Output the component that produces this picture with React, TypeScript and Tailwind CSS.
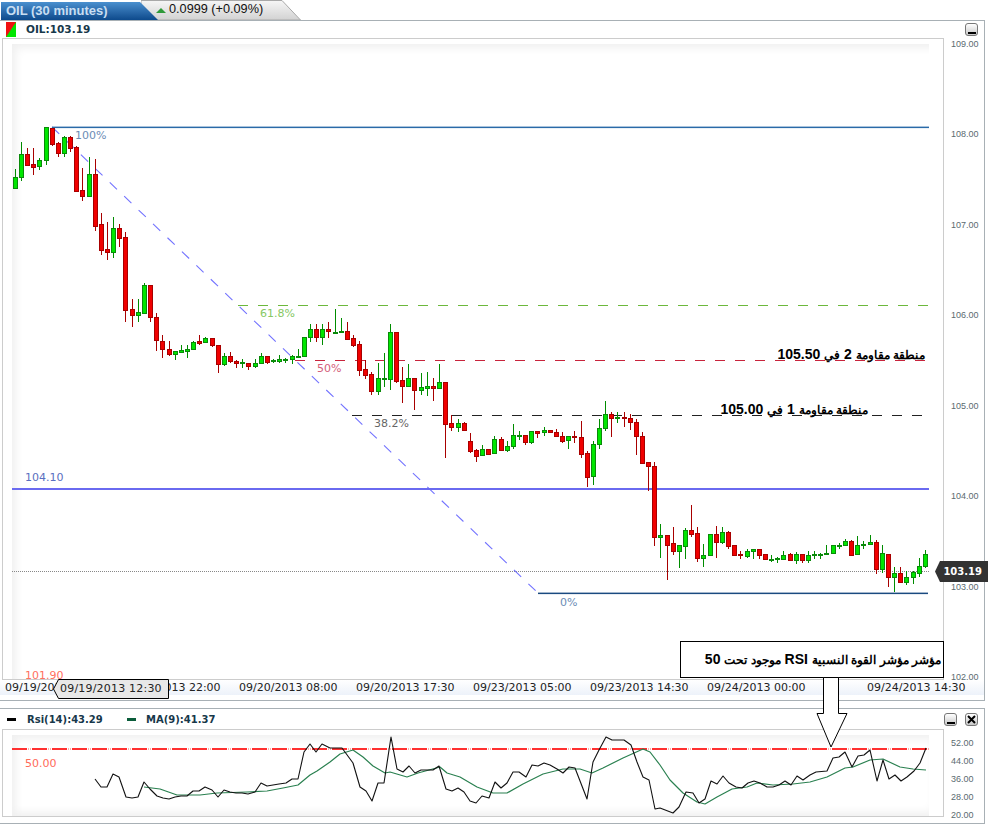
// OIL 30 minute chart with RSI panel
type Candle = [number, number, number, number, number];

// wick top, body top, body bottom, wick bottom, 1 = up (green)
const candles: Candle[] = [
  [169, 177, 188, 188, 1], [142, 154, 177, 181, 1], [148, 154, 165, 166, 0], [148, 164, 167, 175, 0],
  [158, 160, 166, 170, 1], [127, 127, 160, 165, 1], [128, 128, 144, 146, 0], [142, 143, 153, 157, 0],
  [136, 137, 153, 157, 1], [136, 137, 148, 152, 0], [146, 147, 191, 192, 0], [168, 190, 196, 201, 0],
  [157, 174, 196, 197, 1], [159, 174, 226, 231, 0], [213, 224, 250, 255, 0], [222, 249, 252, 260, 0],
  [217, 228, 252, 258, 1], [224, 228, 238, 247, 0], [232, 237, 310, 322, 0], [299, 309, 315, 327, 0],
  [299, 312, 315, 322, 1], [283, 285, 313, 313, 1], [285, 285, 317, 322, 0], [313, 317, 340, 351, 0],
  [335, 341, 349, 358, 0], [341, 349, 354, 356, 0], [351, 351, 354, 360, 1], [345, 350, 352, 353, 1],
  [345, 349, 351, 358, 1], [341, 342, 349, 349, 1], [335, 341, 343, 345, 0], [337, 338, 342, 342, 1],
  [338, 338, 345, 347, 0], [345, 345, 364, 373, 0], [353, 356, 364, 366, 1], [352, 356, 361, 363, 0],
  [360, 361, 363, 368, 0], [359, 362, 363, 368, 1], [363, 363, 366, 370, 0], [359, 363, 366, 368, 1],
  [353, 356, 363, 363, 1], [356, 356, 362, 364, 0], [359, 360, 361, 363, 1], [355, 359, 361, 363, 1],
  [358, 359, 360, 363, 1], [355, 356, 359, 364, 1], [349, 356, 357, 357, 1], [337, 337, 356, 356, 1],
  [324, 329, 337, 342, 1], [324, 329, 337, 342, 0], [324, 329, 337, 345, 1], [322, 329, 331, 338, 0],
  [309, 332, 333, 333, 1], [318, 331, 332, 332, 1], [322, 331, 339, 339, 0], [335, 338, 345, 347, 0],
  [341, 344, 370, 376, 0], [360, 369, 375, 379, 0], [372, 374, 391, 395, 0], [363, 378, 391, 395, 1],
  [353, 378, 379, 387, 1], [324, 332, 379, 390, 1], [332, 332, 381, 383, 0], [367, 380, 386, 403, 0],
  [364, 378, 386, 386, 1], [378, 378, 390, 410, 0], [373, 387, 390, 395, 1], [372, 386, 388, 396, 1],
  [378, 386, 388, 401, 0], [364, 382, 388, 388, 1], [382, 382, 424, 458, 0], [415, 423, 427, 431, 0],
  [419, 423, 427, 432, 1], [422, 423, 430, 430, 0], [433, 441, 451, 453, 0], [449, 450, 456, 462, 0],
  [445, 449, 455, 455, 1], [449, 449, 454, 455, 0], [436, 439, 453, 454, 1], [437, 439, 450, 450, 0],
  [441, 446, 450, 452, 1], [424, 435, 446, 449, 1], [431, 435, 436, 440, 1], [435, 435, 442, 445, 0],
  [431, 431, 442, 444, 1], [431, 431, 433, 438, 0], [427, 430, 432, 436, 1], [430, 430, 432, 432, 0],
  [429, 432, 436, 436, 0], [432, 436, 441, 443, 0], [436, 436, 440, 449, 1], [431, 436, 437, 443, 0],
  [421, 437, 454, 458, 0], [451, 453, 477, 487, 0], [441, 444, 476, 485, 1], [419, 428, 444, 449, 1],
  [401, 414, 428, 431, 1], [412, 414, 418, 437, 0], [412, 417, 418, 423, 1], [412, 417, 418, 427, 0],
  [414, 418, 422, 430, 0], [419, 422, 436, 455, 0], [432, 436, 463, 463, 0], [462, 462, 466, 491, 0],
  [462, 466, 537, 546, 0], [524, 535, 537, 558, 1], [535, 535, 545, 580, 0], [527, 543, 551, 555, 0],
  [545, 545, 551, 568, 1], [528, 530, 546, 559, 1], [505, 530, 534, 537, 0], [527, 533, 558, 562, 0],
  [544, 555, 558, 567, 1], [534, 534, 555, 555, 1], [526, 534, 542, 558, 0], [527, 532, 542, 544, 1],
  [531, 532, 546, 549, 0], [545, 545, 555, 555, 0], [551, 554, 555, 559, 0], [549, 551, 556, 558, 1],
  [549, 549, 551, 559, 1], [549, 549, 555, 559, 0], [554, 554, 559, 559, 0], [555, 559, 560, 562, 1],
  [557, 558, 559, 563, 1], [551, 555, 559, 559, 1], [553, 554, 560, 561, 0], [552, 554, 560, 564, 1],
  [554, 554, 560, 563, 0], [551, 555, 560, 563, 1], [551, 554, 555, 559, 1], [553, 554, 555, 559, 1],
  [545, 553, 554, 554, 1], [545, 545, 553, 553, 1], [543, 545, 546, 549, 1], [539, 541, 545, 545, 1],
  [540, 541, 555, 555, 0], [536, 545, 554, 554, 1], [541, 544, 545, 549, 1], [535, 542, 544, 545, 1],
  [540, 542, 569, 574, 0], [545, 553, 569, 573, 1], [554, 554, 577, 587, 0], [567, 573, 577, 592, 1],
  [567, 573, 582, 582, 0], [571, 577, 582, 585, 1], [571, 572, 577, 584, 1], [558, 566, 573, 577, 1],
  [550, 554, 566, 568, 1],
];

const rsi =
  "95,779 101,787 107,787 113,774 119,777 126,797 132,798 138,797 144,782 150,789 157,796 163,798 169,799 175,797 181,796 187,796 193,791 199,791 205,787 212,790 218,797 224,790 230,792 236,793 242,793 248,794 255,792 261,783 267,786 273,785 279,784 286,783 292,779 298,779 304,752 310,744 316,752 322,744 330,748 342,748 353,763 360,787 366,791 372,801 378,783 384,783 391,737 397,769 403,772 409,766 415,773 421,770 427,770 433,770 439,766 446,789 452,791 458,788 464,792 470,801 476,803 482,796 489,798 495,782 501,788 507,783 513,772 519,772 526,777 532,765 538,766 544,763 550,765 557,769 563,773 569,767 575,768 587,799 593,762 599,750 606,737 612,740 618,740 624,740 631,745 637,762 643,777 649,780 655,809 660,808 673,813 679,807 686,792 693,793 699,803 705,799 711,781 717,784 723,776 729,783 736,787 742,788 748,783 754,781 760,783 767,787 773,787 779,785 785,781 791,785 797,776 803,780 810,775 816,772 827,771 833,758 839,757 845,752 852,767 858,756 864,755 870,750 877,781 883,760 889,779 895,775 901,781 907,777 914,771 920,763 926,748";

const ma =
  "144,787 160,789 177,795 200,795 217,793 247,792 267,791 283,788 298,785 310,775 317,771 330,762 340,754 353,750 363,757 373,766 385,773 390,772 407,777 418,773 440,767 447,773 460,777 477,787 493,793 507,793 523,784 543,774 563,769 580,769 592,773 603,768 623,758 643,749 650,752 660,765 670,780 683,793 697,802 705,804 717,797 732,789 747,787 757,783 773,785 793,784 810,782 827,777 845,768 853,767 870,760 883,759 900,767 913,769 926,770";

const priceLabels = ["109.00", "108.00", "107.00", "106.00", "105.00", "104.00", "103.00", "102.00"];
const rsiLabels = ["52.00", "44.00", "36.00", "28.00", "20.00"];
const dates = [
  "09/19/2013 12:30",
  "09/19/2013 22:00",
  "09/20/2013 08:00",
  "09/20/2013 17:30",
  "09/23/2013 05:00",
  "09/23/2013 14:30",
  "09/24/2013 00:00",
];

const chartText = "font-['DejaVu_Sans',sans-serif] text-[11px]";

const MinButton = () => (
  <div className="flex h-[13px] w-[13px] items-end justify-center rounded-[3px] border border-[#777] bg-gradient-to-b from-white to-[#c8c8c8] pb-[1px]">
    <div className="h-[2px] w-[8px] bg-black" />
  </div>
);

const CloseButton = () => (
  <div className="flex h-[13px] w-[13px] items-center justify-center rounded-[3px] border border-[#777] bg-gradient-to-b from-white to-[#c8c8c8]">
    <svg width="9" height="9" viewBox="0 0 9 9">
      <path d="M1 1L8 8M8 1L1 8" stroke="#000" strokeWidth="2" />
    </svg>
  </div>
);

const PriceChart = () => (
  <svg className="absolute left-0 top-0 overflow-visible" width="940" height="640" viewBox="3 39 940 640">
    <line x1="12" y1="571.5" x2="929" y2="571.5" stroke="#888" strokeDasharray="1 1" />
    <line x1="52" y1="127" x2="538" y2="593" stroke="#7272ff" strokeWidth="1.1" strokeDasharray="10 10" />
    <rect x="52" y="126.6" width="877" height="1.5" fill="#2a6aa8" />
    <line x1="238" y1="305.5" x2="929" y2="305.5" stroke="#6cb83c" strokeDasharray="10 10" />
    <line x1="295" y1="360.5" x2="925" y2="360.5" stroke="#c8243c" strokeDasharray="10 10" />
    <line x1="352" y1="415.5" x2="923" y2="415.5" stroke="#222" strokeDasharray="10 10" />
    <rect x="538" y="592.6" width="390" height="1.5" fill="#1a4a80" />
    <line x1="12" y1="489" x2="929" y2="489" stroke="#6a6af0" strokeWidth="2" />

    {candles.map(([wt, top, bottom, wb, up], i) => {
      const x = Math.floor(15.3 + 6.149 * i) + 0.5;
      return (
        <g key={i} shapeRendering="crispEdges">
          <line x1={x} y1={wt} x2={x} y2={wb} stroke={up ? "#008c00" : "#a80000"} />
          <rect
            x={x - 2}
            y={top + 0.5}
            width="4"
            height={Math.max(bottom - top, 1)}
            fill={up ? "#00e600" : "#f00000"}
            stroke={up ? "#0a8a0a" : "#a80000"}
          />
        </g>
      );
    })}

    <text x="75" y="139" fill="#6b8cb5" className={chartText}>100%</text>
    <text x="260" y="317" fill="#86c864" className={chartText}>61.8%</text>
    <text x="317" y="372" fill="#d4607a" className={chartText}>50%</text>
    <text x="374" y="427" fill="#666" className={chartText}>38.2%</text>
    <text x="560" y="606" fill="#6b8cb5" className={chartText}>0%</text>
    <text x="25" y="481" fill="#5a6fc0" className={chartText}>104.10</text>
    <text x="25" y="679" fill="#ff7060" className={chartText}>101.90</text>
  </svg>
);

const RsiChart = () => (
  <svg className="absolute left-0 top-0" width="940" height="86" viewBox="3 730 940 86">
    <line x1="12" y1="749" x2="929" y2="749" stroke="#ff5a50" strokeDasharray="1 1" />
    <line x1="12" y1="749" x2="929" y2="749" stroke="#ff3030" strokeWidth="2" strokeDasharray="15 5" />
    <polyline points={ma} fill="none" stroke="#2a8050" strokeWidth="1.2" strokeLinejoin="round" />
    <polyline points={rsi} fill="none" stroke="#111" strokeWidth="1.1" strokeLinejoin="round" />
    <text x="25" y="767" fill="#ff6b5a" className={chartText}>50.00</text>
  </svg>
);

export default function App() {
  return (
    <div className="relative h-[824px] w-[989px] overflow-hidden bg-white font-['Liberation_Sans',sans-serif]">
      {/* Tabs */}
      <div className="flex h-[20px] items-end">
        <div className="relative z-10 ml-[1px] flex h-[18px] w-[157px] items-center bg-gradient-to-b from-[#4a90cf] to-[#0d4a8c] pl-[5px] text-[13px] font-bold text-[#c8def2] [clip-path:polygon(0_0,139px_0,100%_100%,0_100%)]">
          OIL (30 minutes)
        </div>
        <div className="relative -ml-[17px] flex h-[20px] w-[160px] items-center pl-[15px] text-[12.7px] text-[#111]">
          <svg className="absolute left-0 top-0" width="160" height="20" viewBox="0 0 160 20">
            <defs>
              <linearGradient id="tabFill" x1="0" y1="0" x2="0" y2="1">
                <stop offset="0" stopColor="#f6f6f6" />
                <stop offset="1" stopColor="#d2d2d2" />
              </linearGradient>
            </defs>
            <path d="M0 .5H141L159.5 20H0Z" fill="url(#tabFill)" stroke="#a8a8a8" />
          </svg>
          <div className="relative mr-[3px] h-0 w-0 border-x-[5px] border-b-[5px] border-x-transparent border-b-[#2f9a3a]" />
          <span className="relative">0.0999 (+0.09%)</span>
        </div>
      </div>

      {/* Main panel */}
      <div className="h-[681px] w-[985px] border-y border-r border-[#a8b0b5]">
        <div className="flex h-[17px] items-center pl-[6px] pr-[6px]">
          <svg width="10" height="15" viewBox="0 0 10 15">
            <rect width="10" height="15" fill="#00e600" />
            <path d="M0 0H10L0 15Z" fill="#f01010" />
          </svg>
          <span className="ml-[10px] font-['DejaVu_Sans',sans-serif] text-[10.5px] font-bold text-[#17384a]">OIL:103.19</span>
          <div className="ml-auto">
            <MinButton />
          </div>
        </div>

        <div className="flex h-[642px] pl-[2px]">
          <div className="relative h-[642px] w-[942px] border border-[#cccccc]">
            <div className="ml-[9px] mr-[14px] mt-[5px] h-[635px] shadow-[inset_8px_8px_8px_-4px_#f0f0f0]" />
            <PriceChart />
          </div>
          <div className="flex h-[645px] flex-1 flex-col justify-between pl-[7px] text-[9px] leading-[12px] text-[#5a6a70]">
            {priceLabels.map((p) => (
              <span key={p}>{p}</span>
            ))}
          </div>
        </div>

        <div className="flex h-[15px] items-center bg-gradient-to-b from-white to-[#edf2fa] pl-[5px] pt-[1px] font-['DejaVu_Sans',sans-serif] text-[11px] text-[#222]">
          {dates.map((d) => (
            <span key={d} className="w-[117px] shrink-0">{d}</span>
          ))}
          <span className="ml-[43px] shrink-0">09/24/2013 14:30</span>
        </div>
      </div>

      {/* RSI panel */}
      <div className="mt-[7px] h-[116px] w-[985px] border-y border-r border-[#a8b0b5]">
        <div className="flex h-[20px] items-center pl-[7px] pr-[6px] font-['DejaVu_Sans',sans-serif] text-[10px] font-bold text-[#17384a]">
          <div className="h-[3px] w-[9px] bg-black" />
          <span className="ml-[11px] w-[100px]">Rsi(14):43.29</span>
          <div className="h-[3px] w-[9px] bg-[#0a5c3a]" />
          <span className="ml-[10px]">MA(9):41.37</span>
          <div className="ml-auto flex gap-[8px]">
            <MinButton />
            <CloseButton />
          </div>
        </div>
        <div className="ml-[2px] flex h-[92px]">
          <div className="relative h-[88px] w-[942px] border border-[#cccccc]">
            <div className="ml-[9px] mr-[14px] mt-[5px] h-[81px] shadow-[inset_8px_8px_8px_-4px_#f0f0f0,inset_0_-8px_8px_-4px_#f0f0f0]" />
            <RsiChart />
          </div>
          <div className="flex flex-1 flex-col justify-between pl-[7px] pt-[8px] text-[9px] leading-[12px] text-[#5a6a70]">
            {rsiLabels.map((p) => (
              <span key={p}>{p}</span>
            ))}
          </div>
        </div>
      </div>

      {/* Hover date on the time axis */}
      <div className="absolute left-[53px] top-[679px] flex h-[20px] w-[116px] items-center pl-[7px] font-['DejaVu_Sans',sans-serif] text-[11px] tracking-[0.2px] text-[#222]">
        <svg className="absolute left-0 top-0" width="116" height="20" viewBox="0 0 116 20">
          <path d="M5.5 .5H115.5V19.5H5.5L.5 10Z" fill="#e8e8e8" stroke="#000" />
        </svg>
        <span className="relative">09/19/2013 12:30</span>
      </div>

      {/* Last price tag */}
      <div className="absolute left-[935px] top-[561px] flex h-[21px] w-[53px] items-center justify-end bg-[#333] pr-[6px] font-['DejaVu_Sans',sans-serif] text-[10px] font-bold text-white [clip-path:polygon(0_50%,5px_0,100%_0,100%_100%,5px_100%)]">
        103.19
      </div>

      {/* Annotations */}
      <div dir="rtl" className="absolute right-[64px] top-[344px] whitespace-nowrap text-[14px] font-bold text-black">
        <span className="text-[11.7px]">منطقة مقاومة</span> 2 <span className="text-[11.7px]">في</span> 105.50
      </div>
      <div dir="rtl" className="absolute right-[121px] top-[399px] whitespace-nowrap text-[14px] font-bold text-black">
        <span className="text-[11.7px]">منطقة مقاومة</span> 1 <span className="text-[11.7px]">في</span> 105.00
      </div>
      <div dir="rtl" className="absolute left-[680px] top-[641px] flex h-[37px] w-[264px] items-center whitespace-nowrap border border-black bg-white pr-[2px] text-[14px] font-bold text-black">
        <span>
          <span className="text-[12.2px]">مؤشر مؤشر القوة النسبية</span> RSI <span className="text-[12.2px]">موجود تحت</span> 50
        </span>
      </div>
      <svg className="absolute left-[816px] top-[677px]" width="32" height="71" viewBox="816 677 32 71">
        <path d="M823.5 677.5H838.5V713.5H847L831 747L817 713.5H823.5Z" fill="#fff" stroke="#000" />
      </svg>
    </div>
  );
}
